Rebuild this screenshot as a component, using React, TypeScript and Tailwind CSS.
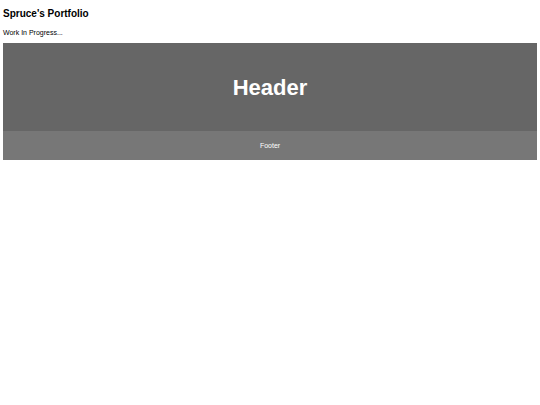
export default function App() {
  return (
    <div className="min-h-screen bg-white px-[3px] pt-[8px] font-['Liberation_Sans',Arial,sans-serif] text-black">
      <h1 className="text-[10px] leading-[12px] font-bold">Spruce's Portfolio</h1>
      <p className="mt-[8px] text-[7px] leading-[9px]">Work In Progress...</p>
      <div className="mt-[6px] flex flex-col">
        <header className="flex h-[88px] items-center justify-center bg-[#666666] pt-px">
          <h2 className="text-[22px] leading-none font-bold text-white">Header</h2>
        </header>
        <footer className="flex h-[29px] items-center justify-center bg-[#777777]">
          <span className="text-[7px] leading-none text-white">Footer</span>
        </footer>
      </div>
    </div>
  )
}
